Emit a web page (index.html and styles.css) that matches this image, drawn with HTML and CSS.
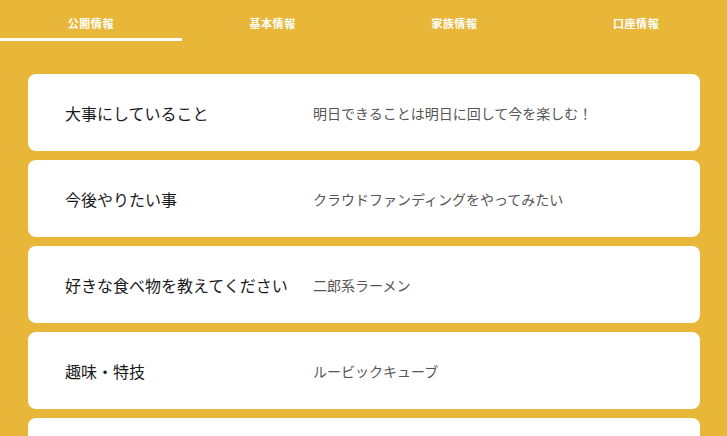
FILE: index.html
```html
<!DOCTYPE html>
<html lang="ja">
<head>
<meta charset="utf-8">
<link rel="stylesheet" href="styles.css">
</head>
<body>
<nav class="tabs">
  <div class="tab active">公開情報</div>
  <div class="tab">基本情報</div>
  <div class="tab">家族情報</div>
  <div class="tab">口座情報</div>
</nav>
<main class="list">
  <div class="card"><div class="label">大事にしていること</div><div class="value">明日できることは明日に回して今を楽しむ！</div></div>
  <div class="card"><div class="label">今後やりたい事</div><div class="value">クラウドファンディングをやってみたい</div></div>
  <div class="card"><div class="label">好きな食べ物を教えてください</div><div class="value">二郎系ラーメン</div></div>
  <div class="card"><div class="label">趣味・特技</div><div class="value">ルービックキューブ</div></div>
  <div class="card"></div>
</main>
</body>
</html>
```
FILE: styles.css
```css
* { box-sizing: border-box; }
html, body { margin: 0; padding: 0; }
body {
  background: #e8b73a;
  font-family: "Noto Sans CJK JP", "Noto Sans", sans-serif;
  width: 727px;
  height: 436px;
  overflow: hidden;
}
.tabs {
  display: grid;
  grid-template-columns: repeat(4, 1fr);
  height: 41px;
}
.tab {
  display: flex;
  align-items: center;
  justify-content: center;
  padding-top: 8px;
  color: #fff;
  font-size: 11px;
  font-weight: 700;
  letter-spacing: 0.6px;
  border-bottom: 3px solid transparent;
}
.tab.active { border-bottom-color: #fff; }
.list {
  display: flex;
  flex-direction: column;
  gap: 9px;
  padding: 33px 27px 0 28px;
}
.card {
  background: #fff;
  border-radius: 8px;
  height: 77px;
  flex-shrink: 0;
  display: flex;
  align-items: center;
  padding-left: 37px;
}
.label {
  width: 248px;
  font-size: 16px;
  color: #1a1a1a;
  white-space: nowrap;
}
.value {
  font-size: 14px;
  color: #555;
  white-space: nowrap;
}
```
